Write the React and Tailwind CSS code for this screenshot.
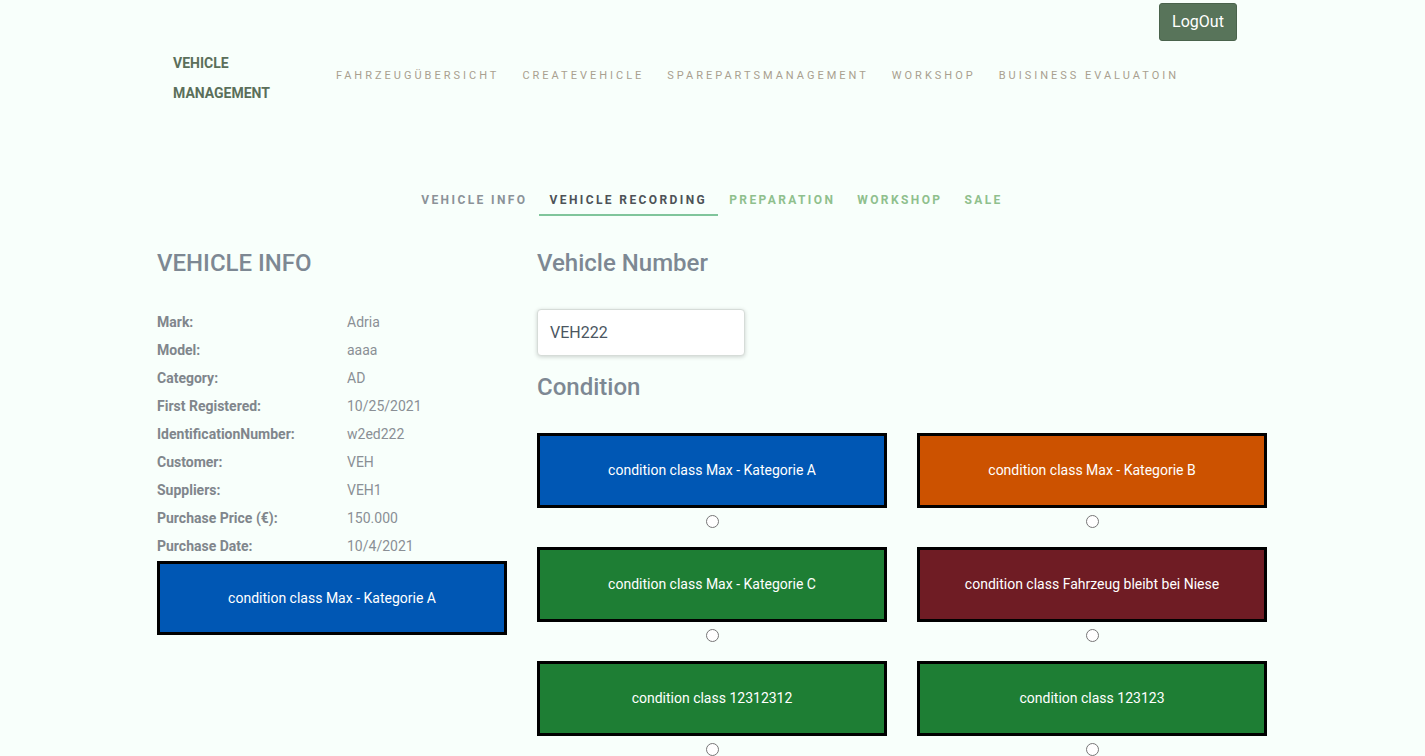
import React from 'react';

const navLinks = ['Fahrzeugübersicht', 'CreateVehicle', 'SparePartsManagement', 'Workshop', 'Buisiness Evaluatoin'];

const tabs = [
  { label: 'Vehicle Info', cls: 'text-[#8b9298]' },
  { label: 'Vehicle Recording', cls: 'text-[#4d5257] border-[#80c59b]', active: true },
  { label: 'Preparation', cls: 'text-[#8fc08d]' },
  { label: 'Workshop', cls: 'text-[#8fc08d]' },
  { label: 'Sale', cls: 'text-[#8fc08d]' },
];

const info = [
  ['Mark:', 'Adria'],
  ['Model:', 'aaaa'],
  ['Category:', 'AD'],
  ['First Registered:', '10/25/2021'],
  ['IdentificationNumber:', 'w2ed222'],
  ['Customer:', 'VEH'],
  ['Suppliers:', 'VEH1'],
  ['Purchase Price (€):', '150.000'],
  ['Purchase Date:', '10/4/2021'],
];

const conditions = [
  { name: 'condition class Max - Kategorie A', bg: 'bg-[#0057b4]' },
  { name: 'condition class Max - Kategorie B', bg: 'bg-[#cc5200]' },
  { name: 'condition class Max - Kategorie C', bg: 'bg-[#1e7e34]' },
  { name: 'condition class Fahrzeug bleibt bei Niese', bg: 'bg-[#6f1c24]' },
  { name: 'condition class 12312312', bg: 'bg-[#1e7e34]' },
  { name: 'condition class 123123', bg: 'bg-[#1e7e34]' },
];

const ConditionCard = ({ name, bg, h = 'h-[75px]' }) => (
  <div className={`${bg} ${h} border-[3px] border-black flex items-center justify-center text-white text-[14px]`}>
    {name}
  </div>
);

export default function App() {
  return (
    <div className="min-h-screen bg-[#f8fffb] font-['Roboto',sans-serif]">
      <div className="w-[1110px] ml-[157px]">
        <div className="flex justify-end pt-[3px] pr-[30px]">
          <button className="h-[38px] w-[78px] rounded-[3px] bg-[#58745a] border border-[#4a634c] text-white text-[16px]">
            LogOut
          </button>
        </div>

        <div className="flex mt-[7px] pl-[16px]">
          <div className="w-[163px] text-[14px] font-bold leading-[30px] text-[#5b6f5a] uppercase">
            <div>Vehicle</div>
            <div>Management</div>
          </div>
          <div className="flex gap-[23px] pt-[19px] text-[11px] leading-[18px] tracking-[3px] uppercase text-[#a9a08f]">
            {navLinks.map((l) => (
              <span key={l}>{l}</span>
            ))}
          </div>
        </div>

        <div className="flex justify-center mt-[75px]">
          {tabs.map((t) => (
            <div
              key={t.label}
              className={`px-[11px] pt-[9px] pb-[6px] text-[12px] leading-[16px] font-bold tracking-[2.4px] uppercase border-b-2 ${t.active ? t.cls : t.cls + ' border-transparent'}`}
            >
              {t.label}
            </div>
          ))}
        </div>

        <div className="flex gap-[30px] mt-[33px]">
          <div className="w-[350px]">
            <h2 className="text-[24px] leading-[29px] font-medium text-[#7d8893] uppercase">Vehicle Info</h2>
            <div className="mt-[30px]">
              {info.map(([k, v]) => (
                <div key={k} className="flex h-[28px] items-center text-[14px]">
                  <span className="w-[190px] font-bold text-[#80868c]">{k}</span>
                  <span className="text-[#8a8f95]">{v}</span>
                </div>
              ))}
            </div>
            <div className="mt-[1px]">
              <ConditionCard name="condition class Max - Kategorie A" bg="bg-[#0057b4]" h="h-[74px]" />
            </div>
          </div>

          <div className="w-[730px]">
            <h2 className="text-[24px] leading-[29px] font-medium text-[#7d8893]">Vehicle Number</h2>
            <div className="mt-[31px] w-[208px] h-[47px] bg-white rounded-[4px] border border-[#d6dcd8] shadow-[0_1px_4px_rgba(0,0,0,0.18)] flex items-center px-[12px] text-[16px] text-[#4b5661]">
              VEH222
            </div>
            <h2 className="mt-[17px] text-[24px] leading-[29px] font-medium text-[#7d8893]">Condition</h2>
            <div className="mt-[31px] grid grid-cols-2 gap-x-[30px] gap-y-[19px]">
              {conditions.map((c) => (
                <div key={c.name} className="flex flex-col">
                  <ConditionCard name={c.name} bg={c.bg} />
                  <div className="flex justify-center mt-[7px]">
                    <input type="radio" name="condition" className="w-[13px] h-[13px] m-0" />
                  </div>
                </div>
              ))}
            </div>
          </div>
        </div>
      </div>
    </div>
  );
}
